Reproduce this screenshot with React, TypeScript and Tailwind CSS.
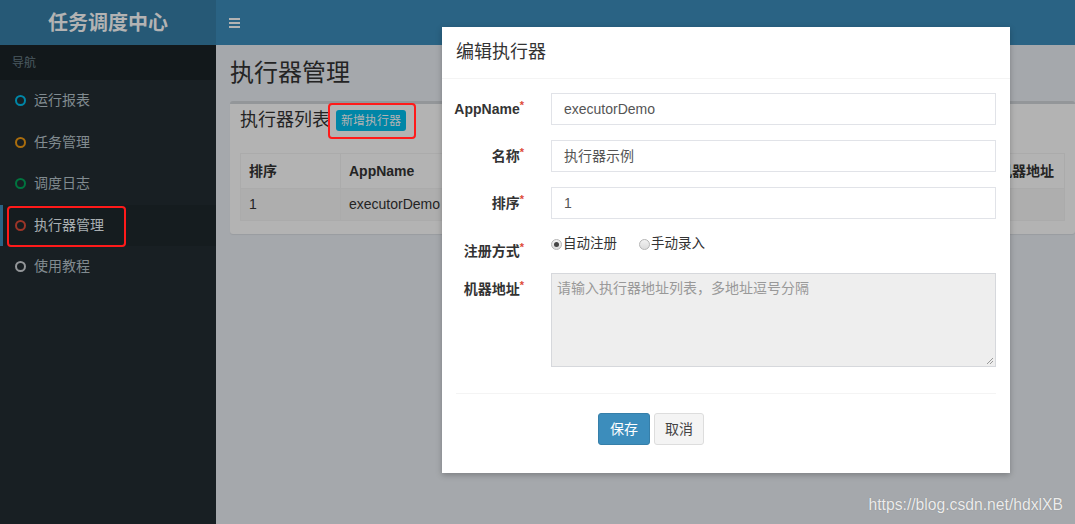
import React from "react";

const navItems = [
  { label: "运行报表", color: "border-[#0086a7]" },
  { label: "任务管理", color: "border-[#aa6d0d]" },
  { label: "调度日志", color: "border-[#00743f]" },
  { label: "执行器管理", color: "border-[#9b3528]", active: true },
  { label: "使用教程", color: "border-[#939699]" },
];

function Radio({ checked, label }: { checked?: boolean; label: string }) {
  return (
    <span className="flex items-center">
      <span className="w-[11px] h-[11px] rounded-full border border-[#b5b5b5] bg-gradient-to-b from-[#f2f2f2] to-[#dcdcdc] flex items-center justify-center">
        {checked && <span className="w-[5px] h-[5px] rounded-full bg-[#444]" />}
      </span>
      <span className="ml-[1px] text-[13.5px] text-[#333]">{label}</span>
    </span>
  );
}

export default function App() {
  return (
    <div className="relative w-[1075px] h-[524px] overflow-hidden flex flex-col font-['Liberation_Sans','Noto_Sans_CJK_SC',sans-serif]">
      {/* header */}
      <div className="flex h-[45px] shrink-0">
        <div className="w-[216px] bg-[#265976] flex items-center justify-center text-[20px] font-bold text-[#b3b3b3]">
          任务调度中心
        </div>
        <div className="flex-1 bg-[#2a6384] flex items-center pl-[13px]">
          <div className="flex flex-col gap-[2px]">
            <span className="block w-[11px] h-[2px] bg-[#b3b3b3]" />
            <span className="block w-[11px] h-[2px] bg-[#b3b3b3]" />
            <span className="block w-[11px] h-[2px] bg-[#b3b3b3]" />
          </div>
        </div>
      </div>

      <div className="flex flex-1">
        {/* sidebar */}
        <div className="w-[216px] bg-[#181f23] flex flex-col">
          <div className="h-[35px] bg-[#12181b] flex items-center pl-[12px] pt-[1px] text-[12px] text-[#4b5a61]">导航</div>
          {navItems.map((it) => (
            <div
              key={it.label}
              className={
                it.active
                  ? "h-[41.5px] flex items-center pl-[12px] border-l-[3px] border-[#2a6384] bg-[#151c1f]"
                  : "h-[41.5px] flex items-center pl-[15px]"
              }
            >
              <span className={"w-[11px] h-[11px] rounded-full border-2 " + it.color} />
              <span className={"ml-[8px] text-[14px] " + (it.active ? "text-[#a9afb2]" : "text-[#818b90]")}>{it.label}</span>
            </div>
          ))}
        </div>

        {/* content */}
        <div className="flex-1 bg-[#a5a8ac] flex flex-col pl-[14px] pt-[15px]">
          <div className="text-[24px] leading-[26px] text-[#242424]">执行器管理</div>
          <div className="mt-[15px] border-t-[3px] border-[#939699] bg-[#b3b3b3] rounded-[3px] shadow-[0_1px_1px_rgba(0,0,0,0.07)]">
            <div className="h-[33px] flex items-center px-[10px]">
              <span className="text-[18px] text-[#242424]">执行器列表</span>
              <span className="ml-[6px] h-[21px] px-[5px] flex items-center bg-[#0086a7] rounded-[3px] text-[12px] text-[#b3b3b3]">新增执行器</span>
            </div>
            <div className="px-[10px] pt-[16px] pb-[13px]">
              <table className="w-full table-fixed border-collapse border border-[#ababab] text-[14px] text-[#242424]">
                <colgroup>
                  <col className="w-[100px]" />
                  <col className="w-[160px]" />
                  <col className="w-[200px]" />
                  <col className="w-[289px]" />
                  <col />
                </colgroup>
                <thead>
                  <tr className="h-[35px]">
                    <th className="text-left font-bold px-[8px] border border-[#ababab]">排序</th>
                    <th className="text-left font-bold px-[8px] border border-[#ababab]">AppName</th>
                    <th className="text-left font-bold px-[8px] border border-[#ababab]"></th>
                    <th className="text-left font-bold px-[8px] border border-[#ababab]"></th>
                    <th className="text-left font-bold px-[8px] border border-[#ababab] whitespace-nowrap">机器地址</th>
                  </tr>
                </thead>
                <tbody>
                  <tr className="h-[32px] bg-[#aeaeae]">
                    <td className="px-[8px] border border-[#ababab]">1</td>
                    <td className="px-[8px] border border-[#ababab]">executorDemo</td>
                    <td className="px-[8px] border border-[#ababab]"></td>
                    <td className="px-[8px] border border-[#ababab]"></td>
                    <td className="px-[8px] border border-[#ababab]"></td>
                  </tr>
                </tbody>
              </table>
            </div>
          </div>
        </div>
      </div>

      {/* red annotation boxes */}
      <div className="absolute left-[7px] top-[206px] w-[119px] h-[41px] border-2 border-[#ff1a1a] rounded-[4px]" />
      <div className="absolute left-[328px] top-[103px] w-[88px] h-[36px] border-2 border-[#ff1a1a] rounded-[4px]" />

      {/* modal */}
      <div className="absolute left-[442px] top-[27px] w-[568px] h-[446px] bg-white shadow-[0_2px_6px_rgba(0,0,0,0.25)] flex flex-col">
        <div className="h-[52px] shrink-0 flex items-center px-[14px] border-b border-[#f4f4f4]">
          <span className="text-[18px] text-[#333]">编辑执行器</span>
        </div>
        <div className="px-[14px] pt-[14px]">
          <div className="grid grid-cols-[82px_1fr] gap-x-[13px] gap-y-[15px] items-start">
            <div className="h-[32px] flex items-center justify-end pr-[14px] text-[14px] font-bold text-[#333] whitespace-nowrap"><span>AppName</span><span className="text-[#dd4b39] text-[11px] -mt-[8px]">*</span></div>
            <div className="h-[32px] border border-[#e1e3e8] flex items-center px-[12px] text-[14px] text-[#555]">executorDemo</div>

            <div className="h-[32px] flex items-center justify-end pr-[14px] text-[14px] font-bold text-[#333]"><span>名称</span><span className="text-[#dd4b39] text-[11px] -mt-[8px]">*</span></div>
            <div className="h-[32px] border border-[#e1e3e8] flex items-center px-[12px] text-[14px] text-[#555]">执行器示例</div>

            <div className="h-[32px] flex items-center justify-end pr-[14px] text-[14px] font-bold text-[#333]"><span>排序</span><span className="text-[#dd4b39] text-[11px] -mt-[8px]">*</span></div>
            <div className="h-[32px] border border-[#e1e3e8] flex items-center px-[12px] text-[14px] text-[#555]">1</div>

            <div className="h-[24px] pt-[7px] flex items-start justify-end pr-[14px] text-[14px] font-bold text-[#333] leading-[20px] whitespace-nowrap"><span>注册方式</span><span className="text-[#dd4b39] text-[11px] leading-[12px]">*</span></div>
            <div className="h-[24px] flex items-start gap-[22px] leading-[20px]">
              <Radio checked label="自动注册" />
              <Radio label="手动录入" />
            </div>

            <div className="pt-[6px] flex items-start justify-end pr-[14px] text-[14px] font-bold text-[#333] leading-[20px] whitespace-nowrap"><span>机器地址</span><span className="text-[#dd4b39] text-[11px] leading-[12px]">*</span></div>
            <div className="relative h-[94px] border border-[#d6d8dc] bg-[#eeeeee] px-[5px] pt-[4px] text-[14px] text-[#999] leading-[20px]">
              请输入执行器地址列表，多地址逗号分隔
              <svg className="absolute right-[1px] bottom-[1px]" width="8" height="8" viewBox="0 0 8 8">
                <path d="M7 1 L1 7 M7 4 L4 7" stroke="#999" strokeWidth="1" />
              </svg>
            </div>
          </div>
          <div className="mt-[26px] border-t border-[#f4f4f4]" />
          <div className="mt-[19px] flex gap-[4px] pl-[142px]">
            <button className="h-[32px] w-[52px] bg-[#3c8dbc] border border-[#367fa9] rounded-[3px] text-[14px] text-white">保存</button>
            <button className="h-[32px] w-[50px] bg-[#f4f4f4] border border-[#dddddd] rounded-[3px] text-[14px] text-[#444]">取消</button>
          </div>
        </div>
      </div>

      {/* watermark */}
      <div className="absolute right-[12px] bottom-[10px] text-[15.7px] leading-[18px] text-[#ececec] [text-shadow:0_0_1px_rgba(0,0,0,0.25)] font-['Liberation_Sans',sans-serif]">
        https://blog.csdn.net/hdxlXB
      </div>
    </div>
  );
}
